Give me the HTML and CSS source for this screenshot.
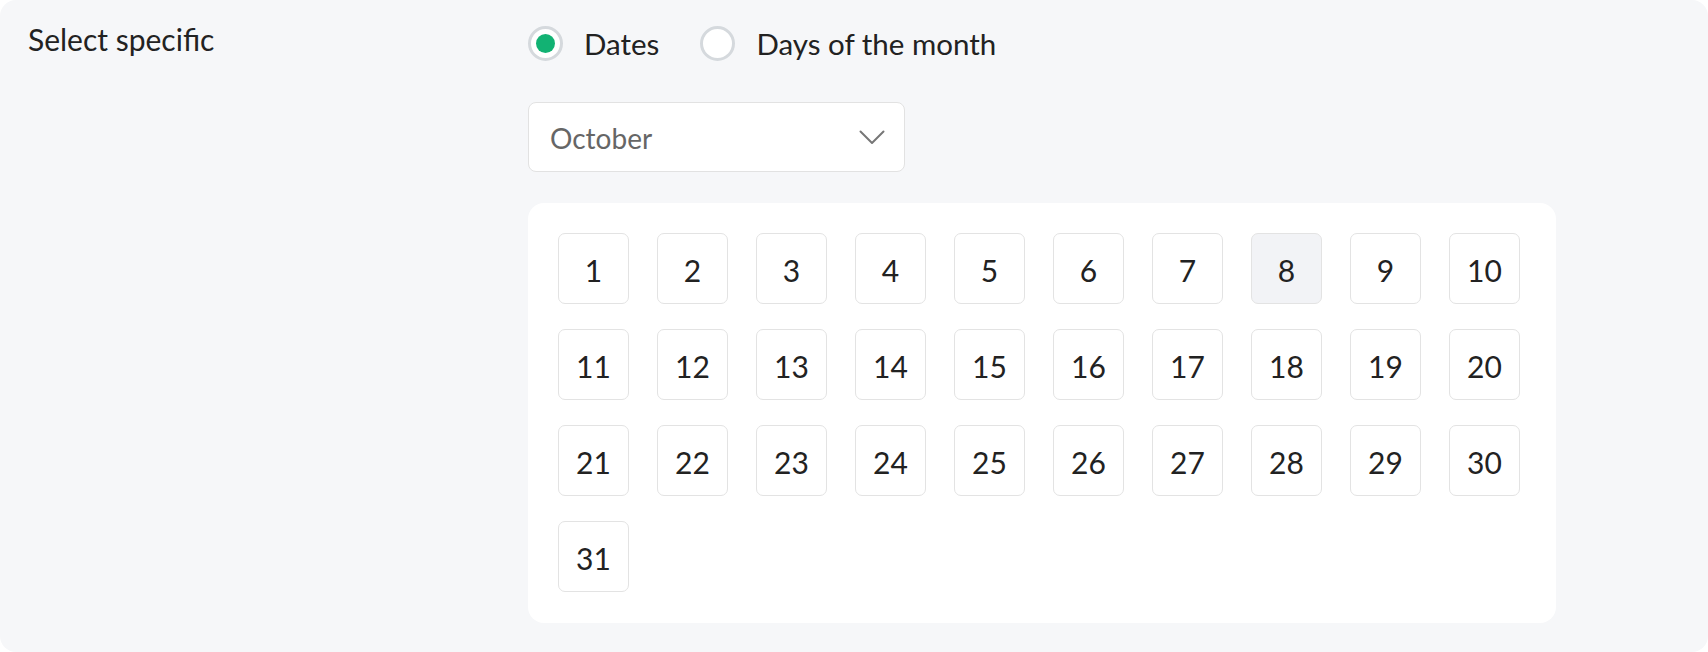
FILE: index.html
```html
<!doctype html>
<html>
<head>
    <title>Select specific</title>
    <link rel="stylesheet" href="styles.css">
</head>
<body>
    <div class="setting">
        <div class="setting-label">Select specific</div>
        <div class="setting-body">
            <div class="radio-group">
                <label class="radio checked">
                    <span class="radio-circle"></span>
                    <span>Dates</span>
                </label>
                <label class="radio">
                    <span class="radio-circle"></span>
                    <span>Days of the month</span>
                </label>
            </div>

            <div class="month-select">
                <span>October</span>
                <svg class="chevron" width="26" height="15" viewBox="0 0 26 15">
                    <path d="M1.5 1.5 L13 13 L24.5 1.5" fill="none" stroke="#777" stroke-width="2" stroke-linecap="round" stroke-linejoin="round"/>
                </svg>
            </div>

            <div class="date-panel">
                <div class="date-grid" id="date-grid"></div>
            </div>
        </div>
    </div>

<script>
    // Fill the grid with the days of the month
    var grid = document.getElementById("date-grid");
    for (var i = 1; i <= 31; i++) {
        var day = document.createElement("div");
        day.className = "day";
        if (i === 8) {
            day.className += " day-active";
        }
        day.innerText = i;
        grid.appendChild(day);
    }
</script>
</body>
</html>
```

FILE: styles.css
```css
    body {
        margin: 0;
        background-color: #fff;
        font-family: Lato, "Open Sans", sans-serif;
        color: #222;
    }
    .setting {
        display: flex;
        align-items: flex-start;
        height: 652px;
        box-sizing: border-box;
        padding: 21px 0 0 28px;
        background-color: #f6f7f9;
        border-radius: 16px;
    }
    .setting-label {
        width: 500px;
        flex-shrink: 0;
        font-size: 30px;
        line-height: 1.2;
    }
    .setting-body {
        display: flex;
        flex-direction: column;
        align-items: flex-start;
        padding-top: 5px;
    }
    .radio-group {
        display: flex;
        align-items: center;
        height: 35px;
        gap: 41px;
        font-size: 29.5px;
    }
    .radio {
        display: flex;
        align-items: center;
        gap: 21px;
        cursor: pointer;
    }
    .radio-circle {
        width: 35px;
        height: 35px;
        box-sizing: border-box;
        border: 3px solid #d5d9dd;
        border-radius: 50%;
        background-color: #fff;
        display: flex;
        align-items: center;
        justify-content: center;
    }
    .radio.checked .radio-circle::after {
        content: "";
        width: 19px;
        height: 19px;
        border-radius: 50%;
        background-color: #12b273;
    }
    .month-select {
        margin-top: 41px;
        width: 377px;
        height: 70px;
        box-sizing: border-box;
        padding: 1px 19px 0 21px;
        display: flex;
        align-items: center;
        justify-content: space-between;
        background-color: #fff;
        border: 1.5px solid #e2e2e2;
        border-radius: 8px;
        font-size: 28px;
        color: #666;
    }
    .date-panel {
        margin-top: 31px;
        width: 1028px;
        box-sizing: border-box;
        padding: 30px 35px 31px 30px;
        background-color: #fff;
        border-radius: 16px;
    }
    .date-grid {
        display: grid;
        grid-template-columns: repeat(10, 71px);
        column-gap: 28px;
        row-gap: 25px;
    }
    .day {
        width: 71px;
        height: 71px;
        box-sizing: border-box;
        padding-top: 3px;
        display: flex;
        align-items: center;
        justify-content: center;
        border: 1.5px solid #e3e3e3;
        border-radius: 7px;
        background-color: #fff;
        font-size: 30px;
        color: #222;
    }
    .day-active {
        background-color: #f2f3f6;
    }
```
